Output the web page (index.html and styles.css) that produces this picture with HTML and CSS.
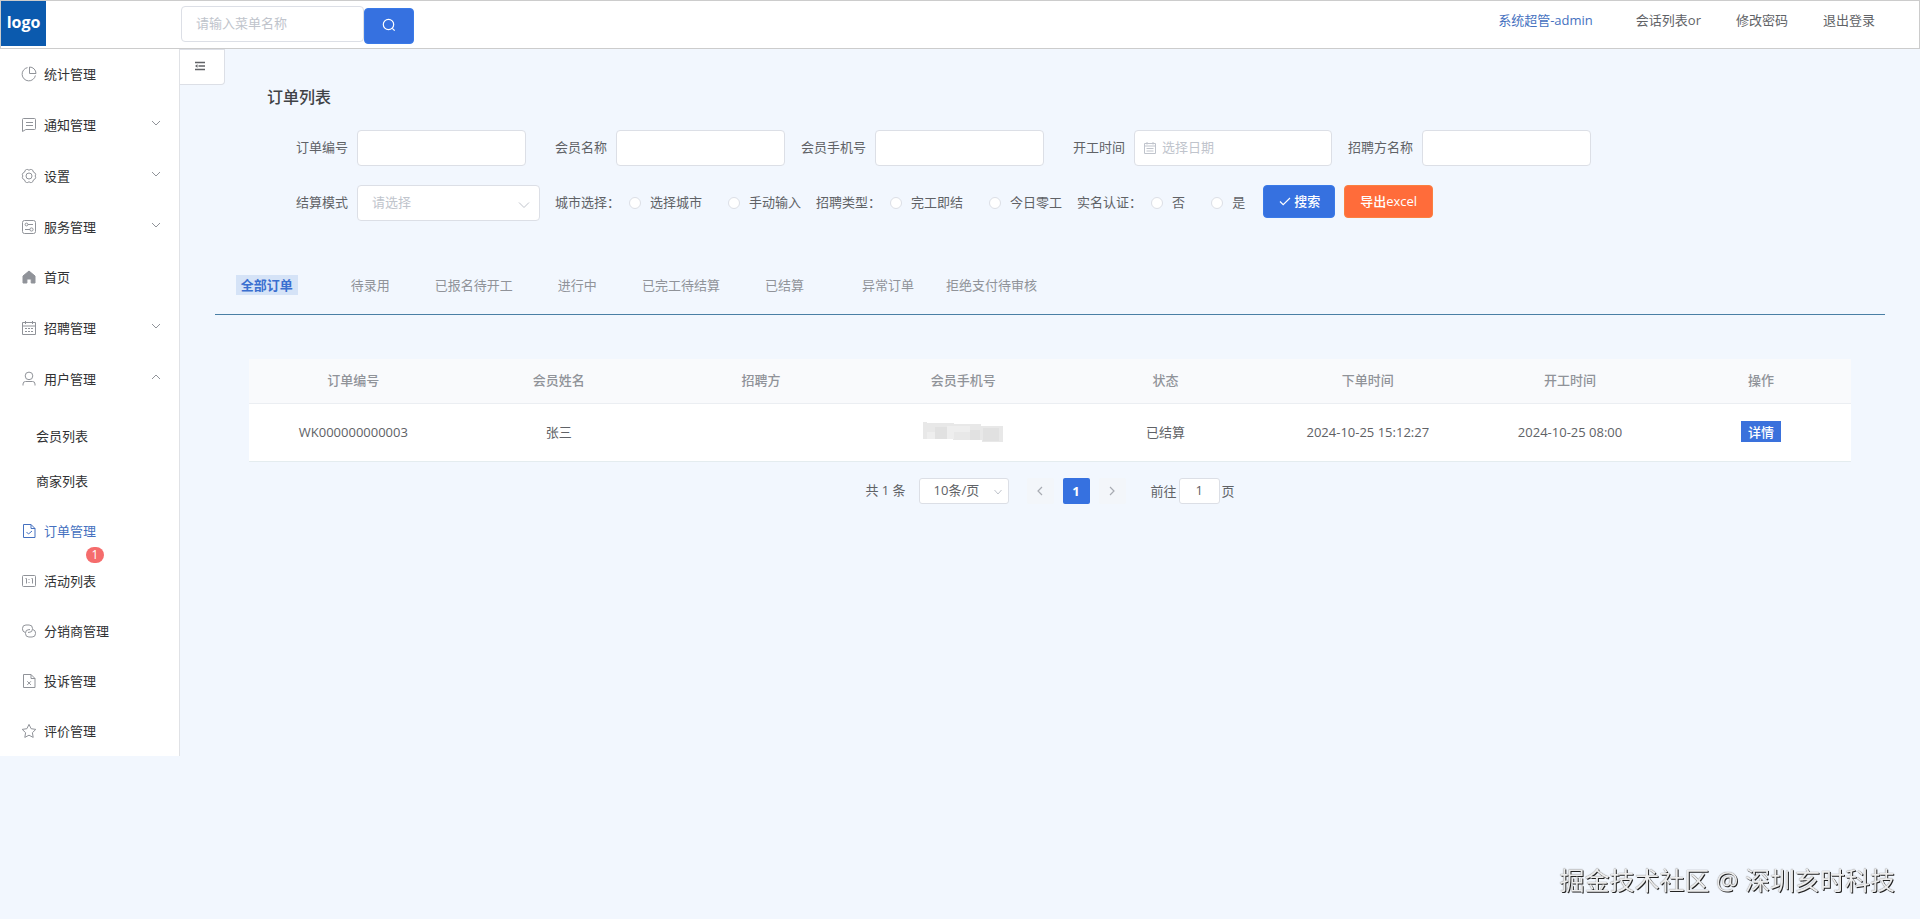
FILE: index.html
```html
<!DOCTYPE html>
<html lang="zh-CN">
<head>
<meta charset="utf-8">
<title>订单列表</title>
<link rel="stylesheet" href="styles.css">
</head>
<body>
<header class="header">
  <div class="brand"><div class="logo">logo</div></div>
  <form class="menu-search">
    <input class="input menu-input" type="text" placeholder="请输入菜单名称" aria-label="请输入菜单名称">
    <button class="btn-primary menu-btn" type="button" aria-label="搜索菜单">
      <svg class="icon" viewBox="0 0 14 14"><circle cx="6.5" cy="6.5" r="5.2"/><path d="M10.3 10.3l2.4 2.4"/></svg>
    </button>
  </form>
  <nav class="user-nav">
    <a class="user-link current" href="#">系统超管-admin</a>
    <a class="user-link" href="#">会话列表or</a>
    <a class="user-link" href="#">修改密码</a>
    <a class="user-link" href="#">退出登录</a>
  </nav>
</header>
<div class="body">
  <aside class="sidebar">
    <nav>
      <a class="item" href="#"><svg class="icon" viewBox="0 0 16 16"><path d="M6.5 1.6A6.7 6.7 0 1 0 14.4 9.500M8.500 1v6.500H15A6.500 6.500 0 0 0 8.500 1z"/></svg>统计管理</a>
      <a class="item parent" href="#"><svg class="icon" viewBox="0 0 16 16"><path d="M2.5 1.5h11a1 1 0 0 1 1 1v9a1 1 0 0 1-1 1H4.8l-3.3 2v-12a1 1 0 0 1 1-1zM5 5.5h7M5 8.5h7"/></svg>通知管理<svg class="icon arrow" viewBox="0 0 10 10"><path d="M1 3l4 4 4-4"/></svg></a>
      <a class="item parent" href="#"><svg class="icon" viewBox="0 0 16 16"><path d="M5.500 1.500h1.300l1.200.8 1.200-.8h1.300l1.500 1 .3 1.500 1.500.8.9 1.500-.5 1.700.5 1.700-.9 1.500-1.500.8-.3 1.500-1.500 1H9.200L8 13.700l-1.200.8H5.500l-1.500-1-.3-1.500-1.500-.8-.9-1.500.5-1.700-.5-1.700.9-1.500L3.700 4 4 2.500z"/><circle cx="8" cy="8" r="3"/></svg>设置<svg class="icon arrow" viewBox="0 0 10 10"><path d="M1 3l4 4 4-4"/></svg></a>
      <a class="item parent" href="#"><svg class="icon" viewBox="0 0 16 16"><rect x="1.500" y="1.500" width="13" height="13" rx="2"/><circle cx="5.500" cy="5.500" r="1.400"/><path d="M7 5.500h5M4 10.500h5"/><circle cx="10.500" cy="10.500" r="1.600"/></svg>服务管理<svg class="icon arrow" viewBox="0 0 10 10"><path d="M1 3l4 4 4-4"/></svg></a>
      <a class="item" href="#"><svg class="icon solid" viewBox="0 0 16 16"><path d="M8 2L14 7v7h-3.800V10H5.900v4H2V7z"/></svg>首页</a>
      <a class="item parent" href="#"><svg class="icon" viewBox="0 0 16 16"><path d="M1.500 2.500h13v12h-13zM1.500 6h13M4.500 1v3M11.500 1v3M4 8.500h2M7 8.500h2M10 8.500h2M4 11.500h2M7 11.500h2M10 11.500h2"/></svg>招聘管理<svg class="icon arrow" viewBox="0 0 10 10"><path d="M1 3l4 4 4-4"/></svg></a>
      <a class="item parent" href="#"><svg class="icon" viewBox="0 0 16 16"><circle cx="8" cy="4.900" r="3.800"/><path d="M2 14.500v-1.500a2.500 2.500 0 0 1 2.500-2.500h7a2.500 2.500 0 0 1 2.500 2.500v1.500"/></svg>用户管理<svg class="icon arrow" viewBox="0 0 10 10"><path d="M1 7l4-4 4 4"/></svg></a>
      <div class="submenu">
        <a class="subitem" href="#">会员列表</a>
        <a class="subitem" href="#">商家列表</a>
      </div>
      <a class="item active" href="#"><svg class="icon" viewBox="0 0 16 16"><path d="M2.500 1.500h7.500l4 4v9H2.500zM10 1.500v4h4M5.500 9l2 2 3.500-3"/></svg>订单管理<span class="badge">1</span></a>
      <a class="item" href="#"><svg class="icon" viewBox="0 0 16 16"><rect x="1.500" y="2.500" width="13" height="11" rx="1"/><path d="M4.500 5.500h1v5M10.500 5.500h1v5M8 6v1M8 9v1"/></svg>活动列表</a>
      <a class="item" href="#"><svg class="icon" viewBox="0 0 16 16"><path d="M4 9.400A3.400 3.400 0 0 1 1.500 6V5.400A3.400 3.400 0 0 1 4.900 2h3.200a3.400 3.400 0 0 1 3.400 3.400V6a3.400 3.400 0 0 1-3.400 3.400H7"/><path d="M12 6.600a3.400 3.400 0 0 1 2.500 3.400v.6a3.400 3.400 0 0 1-3.400 3.400H7.900a3.400 3.400 0 0 1-3.400-3.400V10a3.400 3.400 0 0 1 3.400-3.400H9"/></svg>分销商管理</a>
      <a class="item" href="#"><svg class="icon" viewBox="0 0 16 16"><path d="M2.500 1.500h7.500l4 4v9H2.500zM10 1.500v4h4M6.300 8.300l3.600 3.600M9.900 8.300l-3.600 3.600"/></svg>投诉管理</a>
      <a class="item" href="#"><svg class="icon" viewBox="0 0 16 16"><path d="M8 1.400l2.100 4.300 4.700.7-3.400 3.300.8 4.700L8 12.200l-4.200 2.200.8-4.700L1.200 6.400l4.700-.7z"/></svg>评价管理</a>
    </nav>
  </aside>
  <main class="main">
    <button class="collapse" type="button" aria-label="折叠菜单"><svg class="icon" viewBox="0 0 12 10"><path d="M1 1.500h10M4.500 5h6.500M1 8.500h10"/><path class="fold" d="M3.500 3.200v3.600L1 5z"/></svg></button>
    <h1 class="title">订单列表</h1>
    <form class="filters">
      <div class="row">
        <label class="label" for="f-no">订单编号</label><input class="input field" id="f-no" type="text">
        <label class="label" for="f-name">会员名称</label><input class="input field" id="f-name" type="text">
        <label class="label" for="f-phone">会员手机号</label><input class="input field" id="f-phone" type="text">
        <label class="label" for="f-date">开工时间</label>
        <div class="control date">
          <input class="input date-input" id="f-date" type="text" placeholder="选择日期">
          <svg class="icon date-icon" viewBox="0 0 14 14"><path d="M1.500 2.500h11v10h-11zM1.500 5h11M4 1v2.500M10 1v2.500M3.500 7.500h7M3.500 10h7"/></svg>
        </div>
        <label class="label" for="f-org">招聘方名称</label><input class="input field" id="f-org" type="text">
      </div>
      <div class="row">
        <label class="label" for="f-mode">结算模式</label>
        <div class="control mode">
          <select class="input select empty" id="f-mode"><option>请选择</option></select>
          <svg class="icon caret" viewBox="0 0 14 14"><path d="M2 4.500l5 5 5-5"/></svg>
        </div>
        <fieldset class="radios"><span class="group-label">城市选择：</span>
          <label class="choice"><input class="radio" type="radio" name="city"><span class="choice-text">选择城市</span></label>
          <label class="choice"><input class="radio" type="radio" name="city"><span class="choice-text">手动输入</span></label>
        </fieldset>
        <fieldset class="radios"><span class="group-label">招聘类型：</span>
          <label class="choice"><input class="radio" type="radio" name="kind"><span class="choice-text">完工即结</span></label>
          <label class="choice"><input class="radio" type="radio" name="kind"><span class="choice-text">今日零工</span></label>
        </fieldset>
        <fieldset class="radios"><span class="group-label">实名认证：</span>
          <label class="choice"><input class="radio" type="radio" name="auth"><span class="choice-text">否</span></label>
          <label class="choice"><input class="radio" type="radio" name="auth"><span class="choice-text">是</span></label>
        </fieldset>
        <div class="actions">
          <button class="btn-primary action" type="button"><svg class="icon" viewBox="0 0 12 12"><path d="M1 6.500l3.200 3.200L11 3"/></svg>搜索</button>
          <button class="btn-primary action export" type="button">导出excel</button>
        </div>
      </div>
    </form>
    <div class="tabs" role="tablist">
      <button class="tab on" type="button" role="tab" aria-selected="true"><span class="tab-text">全部订单</span></button>
      <button class="tab" type="button" role="tab">待录用</button>
      <button class="tab" type="button" role="tab">已报名待开工</button>
      <button class="tab" type="button" role="tab">进行中</button>
      <button class="tab" type="button" role="tab">已完工待结算</button>
      <button class="tab" type="button" role="tab">已结算</button>
      <button class="tab" type="button" role="tab">异常订单</button>
      <button class="tab" type="button" role="tab">拒绝支付待审核</button>
    </div>
    <div class="list">
      <table class="table">
        <thead><tr><th class="col-first">订单编号</th><th>会员姓名</th><th>招聘方</th><th>会员手机号</th><th>状态</th><th>下单时间</th><th>开工时间</th><th class="col-last">操作</th></tr></thead>
        <tbody><tr>
          <td>WK000000000003</td><td>张三</td><td></td>
          <td><svg class="mask" viewBox="0 0 80 20"><path fill="#e8e8e8" d="M0 0h4v1h27v1h27v2h22v16H59v-2H30v-1H0z"/><path fill="#e1e1e1" d="M12 5h12v12H12zM47 8h10v10H47zM60 6h16v13H60z"/><path fill="#eee" d="M24 4h7v13h-7zM31 4h16v6H31zM4 10h8v7H4z"/></svg></td>
          <td>已结算</td><td>2024-10-25 15:12:27</td><td>2024-10-25 08:00</td>
          <td><button class="detail" type="button">详情</button></td>
        </tr></tbody>
      </table>
      <div class="pager">
        <span class="total">共 1 条</span>
        <div class="control size">
          <select class="input select size-select" aria-label="每页条数"><option>10条/页</option></select>
          <svg class="icon caret small" viewBox="0 0 10 10"><path d="M1.500 3l3.500 4 3.500-4"/></svg>
        </div>
        <button class="page" type="button" aria-label="上一页"><svg class="icon" viewBox="0 0 10 10"><path d="M7 1L3 5l4 4"/></svg></button>
        <button class="page now" type="button">1</button>
        <button class="page" type="button" aria-label="下一页"><svg class="icon" viewBox="0 0 10 10"><path d="M3 1l4 4-4 4"/></svg></button>
        <label class="jump">前往<input class="input jump-input" type="text" value="1">页</label>
      </div>
    </div>
  </main>
</div>
<div class="watermark">掘金技术社区 @ 深圳亥时科技</div>
</body>
</html>
```
FILE: styles.css
```css
* { box-sizing: border-box; }
body {
  margin: 0;
  min-height: 100vh;
  background: #f2f7fe;
  color: #606266;
  font-family: "Open Sans", "Noto Sans CJK SC", sans-serif;
  font-size: 13px;
  line-height: 20px;
}
a { color: inherit; text-decoration: none; }
button, input, select { font: inherit; color: inherit; margin: 0; }
button { border: 0; padding: 0; background: none; cursor: pointer; }
.icon { fill: none; stroke: currentColor; stroke-width: 1; flex: none; }

.input {
  height: 36px;
  padding: 0 14px 2px;
  border: 1px solid #dcdfe6;
  border-radius: 4px;
  background: #fff;
  outline: none;
}
.input::placeholder { color: #c0c4cc; opacity: 1; }
.btn-primary { background: #3671e0; color: #fff; border: 1px solid #3a7ae8; border-radius: 4px; }

/* header */
.header {
  display: flex;
  align-items: flex-start;
  height: 49px;
  background: #fff;
  border: 1px solid #ccc;
}
.brand { flex: 0 0 180px; }
.logo {
  width: 45px;
  height: 45px;
  background: #0b5aae;
  color: #fff;
  font-size: 16px;
  font-weight: 700;
  line-height: 42px;
  text-align: center;
}
.menu-search { display: flex; padding-top: 5px; }
.menu-input { width: 183px; }
.menu-btn { display: flex; align-items: center; justify-content: center; width: 50px; height: 36px; margin-top: 2px; padding-bottom: 3px; }
.menu-btn .icon { width: 14px; height: 14px; stroke-width: 1.200; }
.user-nav { display: flex; gap: 35px; margin-left: auto; padding: 9px 44px 0 0; }
.user-link.current { color: #4571c0; margin-right: 8px; }

/* sidebar */
.body { display: flex; align-items: flex-start; }
.sidebar { flex: 0 0 180px; background: #fff; border-right: 1px solid #e0e2e6; color: #303133; }
.item { display: flex; align-items: center; height: 50px; padding: 0 18px 0 21px; gap: 7px; position: relative; }
.item .icon { width: 16px; height: 16px; color: #909399; }
.item .solid { fill: currentColor; }
.parent { height: 51px; }
.item .arrow { width: 10px; height: 10px; margin: 0 0 4px auto; }
.submenu { padding: 9px 0 3px; }
.subitem { display: flex; align-items: center; height: 45px; padding-left: 36px; }
.active, .item.active .icon { color: #4571c0; }
.badge {
  position: absolute;
  left: 86px;
  top: 41px;
  width: 18px;
  height: 16px;
  border-radius: 8px;
  background: #f56c6c;
  color: #fff;
  font-size: 12px;
  line-height: 16px;
  text-align: center;
}

/* main */
.main { flex: 1; min-width: 0; }
.collapse {
  display: flex;
  align-items: center;
  justify-content: center;
  width: 45px;
  height: 36px;
  padding-right: 4px;
  padding-bottom: 2px;
  background: #fff;
  border: 1px solid #dcdfe6;
  border-left: 0;
  border-radius: 0 0 4px 0;
}
.collapse .icon { width: 12px; height: 10px; stroke-width: 1.500; }
.collapse .fold { fill: currentColor; stroke: none; }
.title { margin: 0 0 21px 87px; font-size: 16px; font-weight: 500; line-height: 24px; color: #404246; }
.filters { display: grid; gap: 19px; padding-left: 97px; }
.row { display: flex; flex-wrap: wrap; align-items: center; }
.label { width: 80px; padding: 0 9px 2px 0; text-align: right; white-space: nowrap; }
.field { width: 169px; margin-right: 10px; }
.control { position: relative; }
.date { width: 198px; margin-right: 10px; }
.date-input { width: 100%; padding-left: 27px; }
.date-icon { position: absolute; left: 9px; top: 11px; width: 14px; height: 14px; color: #c0c4cc; }
.select { width: 100%; appearance: none; }
.empty { color: #c0c4cc; }
.mode { width: 183px; }
.caret { position: absolute; right: 9px; top: 13px; width: 14px; height: 14px; color: #c0c4cc; pointer-events: none; }
.radios { display: flex; align-items: center; margin: 0 0 0 15px; padding: 0; border: 0; }
.group-label { padding: 0 9px 2px 0; }
.choice { display: flex; align-items: center; gap: 9px; }
.choice-text { padding-bottom: 2px; }
.choice + .choice { margin-left: 26px; }
.radio { appearance: none; width: 12px; height: 12px; border: 1px solid #dcdfe6; border-radius: 50%; background: #fff; }
.actions { display: flex; gap: 9px; margin-left: 18px; padding-bottom: 3px; }
.action { display: flex; align-items: center; gap: 3px; height: 33px; padding: 0 14px 2px 15px; font-weight: 500; }
.action .icon { width: 12px; height: 12px; stroke-width: 1.200; }
.export { padding: 0 15px 2px; background: #ff6c3a; border-color: #fa8040; }

.tabs { display: flex; margin: 54px 35px 0; padding-bottom: 19px; border-bottom: 1px solid #4a7fa5; }
.tab { flex: 0 0 6.200%; color: #909399; white-space: nowrap; }
.tab-text { padding: 1px 5px; background: #d5e3f7; color: #3a6fd0; font-weight: 700; }

.list { padding: 44px 69px 0; }
.table { width: 100%; table-layout: fixed; border-collapse: collapse; text-align: center; }
th { width: 12.600%; height: 44px; padding: 0 0 2px; background: #f9fafc; color: #909399; font-weight: 500; border-bottom: 1px solid #ebeef2; }
.col-first { width: 13%; }
.col-last { width: 11.200%; }
td { height: 58px; padding: 0 0 1px; background: #fff; border-bottom: 1px solid #e4ecef; }
.mask { display: block; width: 80px; height: 20px; margin: 0 auto; }
.detail { height: 21px; padding: 0 7px; background: #3a71dc; color: #fff; line-height: 20px; font-weight: 500; }

.pager { display: flex; align-items: center; justify-content: center; margin-top: 16px; }
.total { margin-right: 13px; padding-bottom: 2px; }
.size { width: 90px; margin-right: 18px; }
.size-select, .jump-input { display: block; height: 26px; border-radius: 3px; }
.small { width: 10px; height: 10px; right: 6px; top: 9px; }
.page { display: flex; align-items: center; justify-content: center; width: 27px; height: 26px; margin-right: 9px; border-radius: 2px; background: #f3f6fa; color: #a8abb2; }
.page .icon { width: 10px; height: 10px; stroke-width: 1.200; }
.now { background: #3671e0; color: #fff; font-weight: 700; }
.jump { display: flex; align-items: center; gap: 2px; margin-left: 16px; }
.jump-input { width: 41px; padding: 0 3px 1px; text-align: center; }

.watermark {
  position: fixed;
  right: 25px;
  bottom: 21px;
  color: #ececec;
  font-size: 25px;
  line-height: 36px;
  text-shadow: 1px 1px 0 #222, 0 0 1px #555;
}
```
